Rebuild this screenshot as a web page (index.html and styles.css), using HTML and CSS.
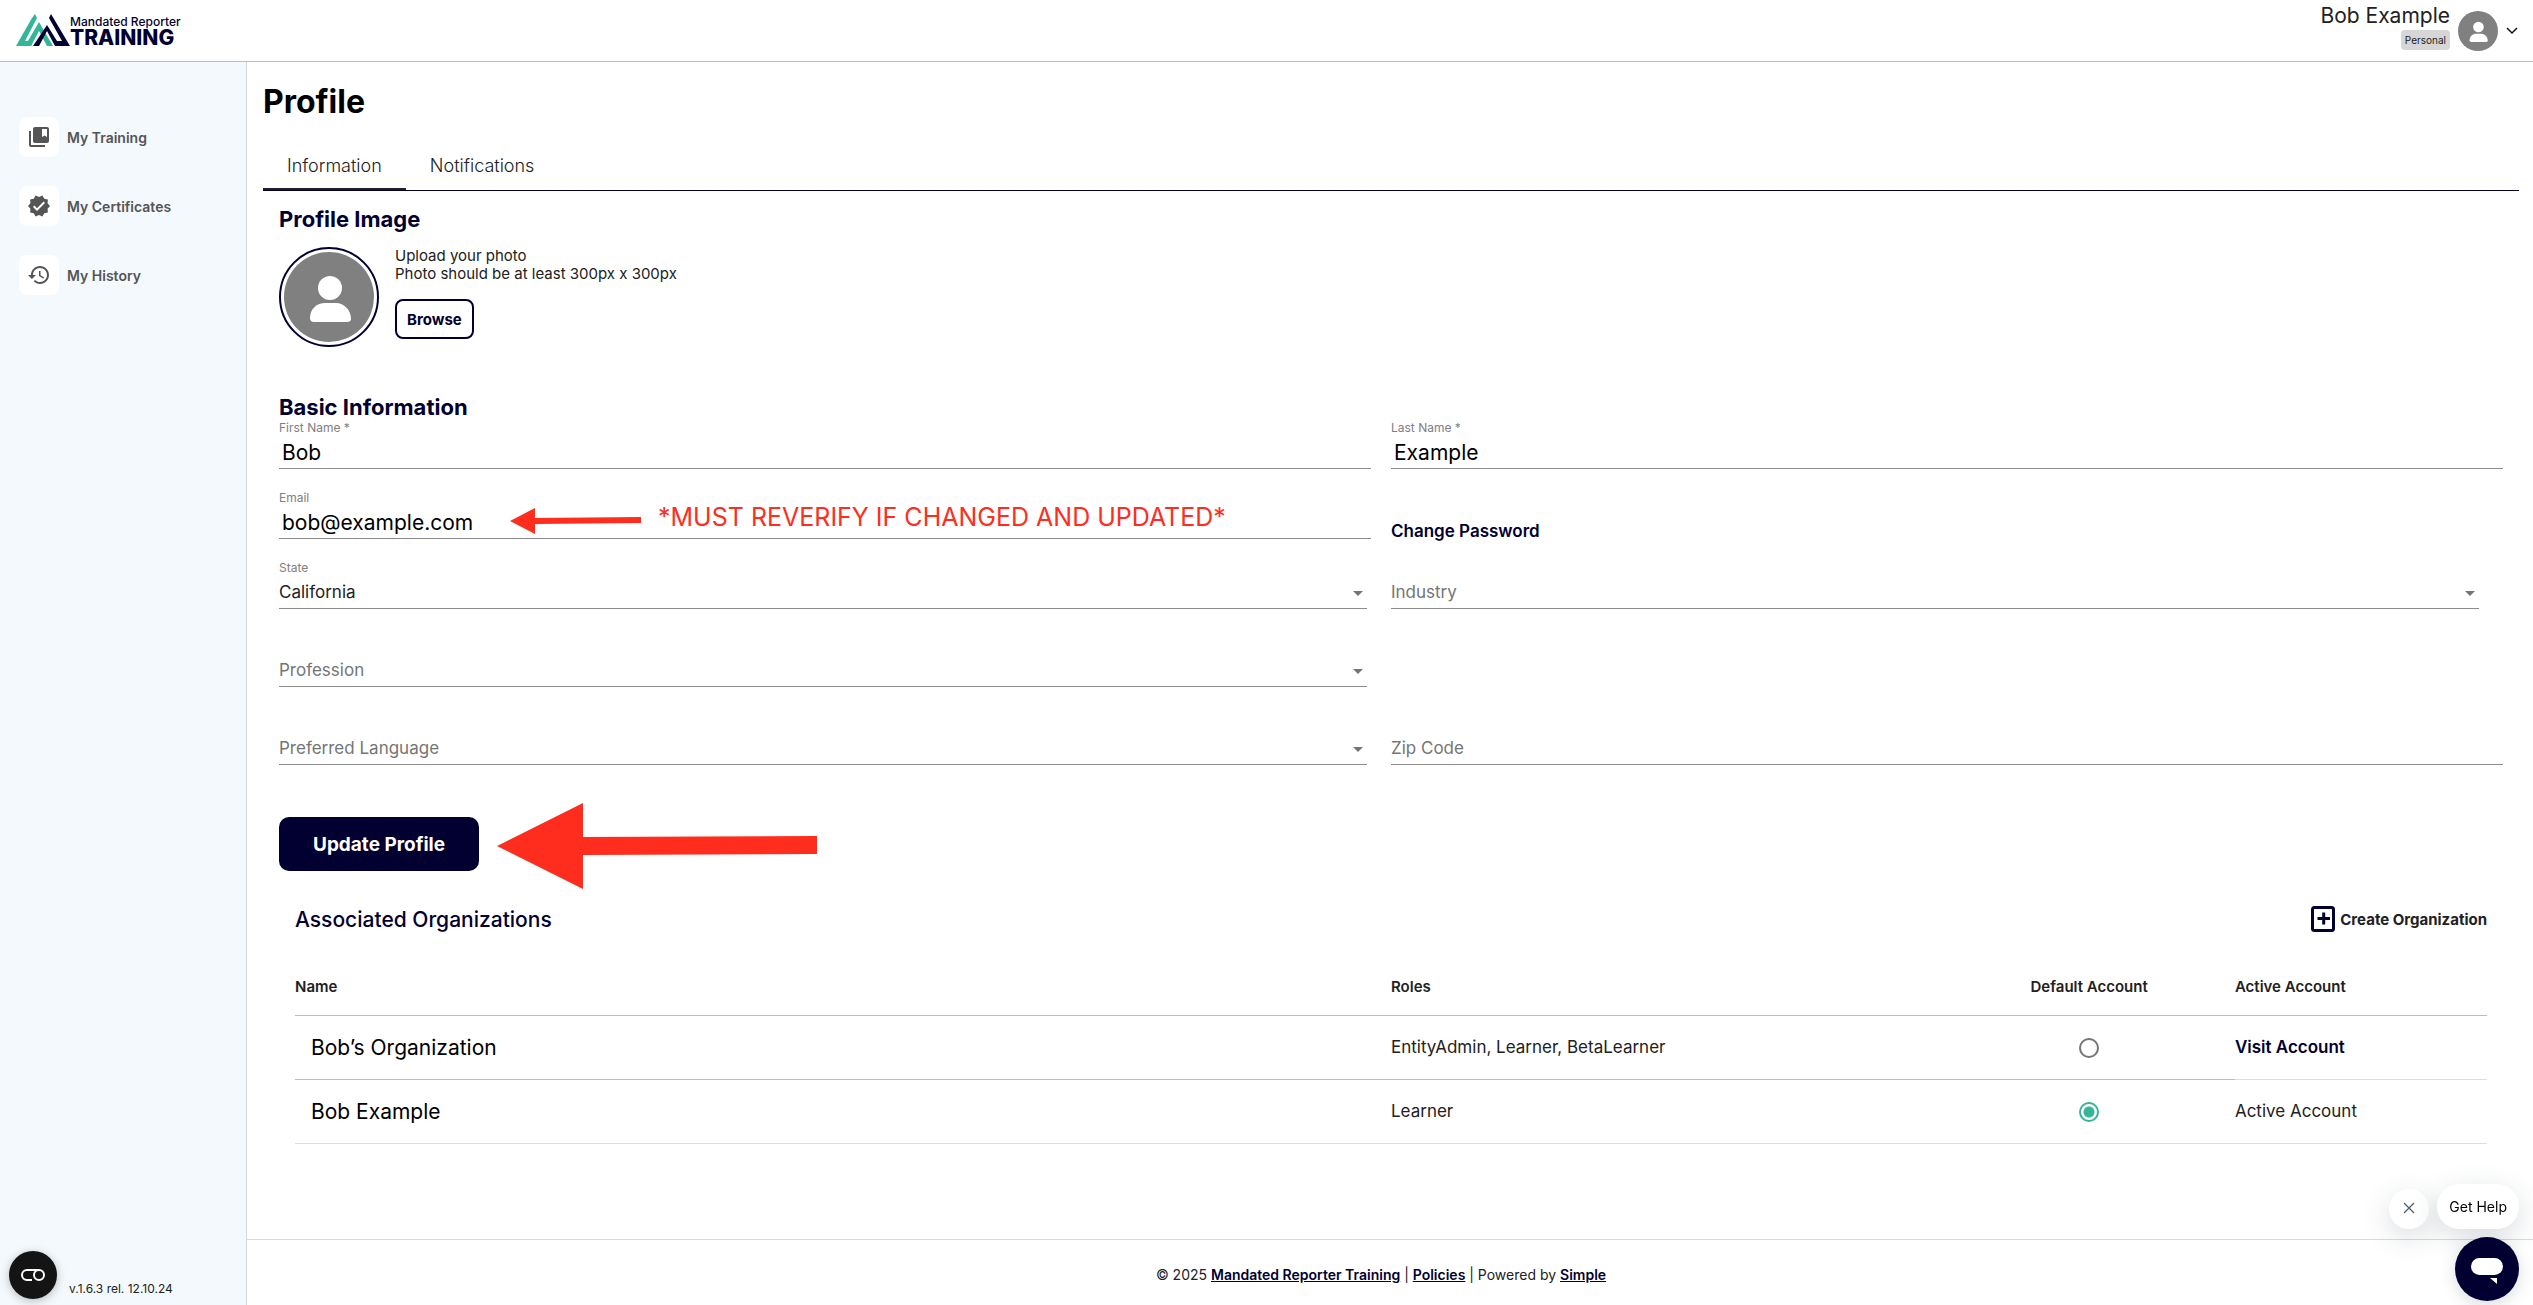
FILE: index.html
```html
<!DOCTYPE html>
<html lang="en">
<head>
    <meta charset="utf-8">
    <title>Profile - Mandated Reporter Training</title>
    <link rel="stylesheet" href="styles.css">
</head>
<body>
    <header class="topbar">
        <a class="logo" href="#">
            <svg class="logo-mark" width="54" height="33" viewBox="0 0 54 33" aria-hidden="true">
                <path d="M19 0L21 4L9 27H17L15 32H0L16 4Z" fill="#34b597"/>
                <path d="M23 8L37 32H31L23 17L15 32H9Z" fill="#34b597"/>
                <path d="M35 0L54 32H39L31 17L23 32H17L31 11L41 27H46L33 4Z" fill="#010030"/>
            </svg>
            <span class="logo-text">
                <span class="logo-small">Mandated Reporter</span>
                <span class="logo-big">TRAINING</span>
            </span>
        </a>
        <button type="button" class="account">
            <span class="account-text">
                <span class="account-name">Bob Example</span>
                <span class="account-badge">Personal</span>
            </span>
            <svg width="40" height="40" viewBox="0 0 90 90" aria-hidden="true">
                <circle cx="45" cy="45" r="45" fill="#808080"/>
                <circle cx="46" cy="36" r="12" fill="#fff"/>
                <path d="M26 66C26 57 33 51 41 51H52C60 51 67 58 67 67Q67 70 63 70H30Q26 70 26 66Z" fill="#fff"/>
            </svg>
            <svg width="12" height="8" viewBox="0 0 12 8" aria-hidden="true">
                <path d="M1 1L6 6L11 1" fill="none" stroke="#111" stroke-width="1.5"/>
            </svg>
        </button>
    </header>

    <div class="page">
        <aside class="sidebar">
            <nav class="menu">
                <a class="menu-item" href="#">
                    <span class="menu-icon">
                        <svg width="24" height="24" viewBox="0 0 24 24"><path d="M4 6H2v14c0 1.1.9 2 2 2h14v-2H4V6zM20 2H8c-1.1 0-2 .9-2 2v12c0 1.1.9 2 2 2h12c1.1 0 2-.9 2-2V4c0-1.1-.9-2-2-2zm0 10-2.5-1.5L15 12V4h5v8z"/></svg>
                    </span>
                    My Training
                </a>
                <a class="menu-item" href="#">
                    <span class="menu-icon">
                        <svg width="24" height="24" viewBox="0 0 24 24"><path d="M23 12l-2.44-2.78.34-3.68-3.61-.82-1.89-3.18L12 3 8.6 1.54 6.71 4.72l-3.61.81.34 3.68L1 12l2.44 2.78-.34 3.69 3.61.82 1.89 3.18L12 21l3.4 1.46 1.89-3.18 3.61-.82-.34-3.68L23 12zm-13 5l-4-4 1.41-1.41L10 14.17l6.59-6.59L18 9l-8 8z"/></svg>
                    </span>
                    My Certificates
                </a>
                <a class="menu-item" href="#">
                    <span class="menu-icon">
                        <svg width="24" height="24" viewBox="0 0 24 24"><path d="M13 3c-4.97 0-9 4.03-9 9H1l3.89 3.89.07.14L9 12H6c0-3.87 3.13-7 7-7s7 3.13 7 7-3.13 7-7 7c-1.93 0-3.68-.79-4.94-2.06l-1.42 1.42C8.27 19.99 10.51 21 13 21c4.97 0 9-4.03 9-9s-4.03-9-9-9zm-1 5v5l4.28 2.54.72-1.21-3.5-2.08V8H12z"/></svg>
                    </span>
                    My History
                </a>
            </nav>
            <div class="sidebar-bottom">
                <button type="button" class="cookie-button" aria-label="Cookie preferences">
                    <svg width="26" height="14" viewBox="0 0 26 14">
                        <path d="M12 12H7A5 5 0 0 1 7 2H19" fill="none" stroke="#fff" stroke-width="2"/>
                        <circle cx="19" cy="7" r="5" fill="none" stroke="#fff" stroke-width="2"/>
                    </svg>
                </button>
                <span class="version">v.1.6.3 rel. 12.10.24</span>
            </div>
        </aside>

        <div class="content">
            <main class="main">
                <h1>Profile</h1>
                <div class="tabs" role="tablist">
                    <button type="button" class="tab active" role="tab" aria-selected="true">Information</button>
                    <button type="button" class="tab" role="tab" aria-selected="false">Notifications</button>
                </div>

                <section class="information">
                    <h2>Profile Image</h2>
                    <div class="photo">
                        <div class="photo-circle">
                            <svg width="90" height="90" viewBox="0 0 90 90" aria-hidden="true">
                                <circle cx="45" cy="45" r="45" fill="#808080"/>
                                <circle cx="46" cy="36" r="12" fill="#fff"/>
                                <path d="M26 66C26 57 33 51 41 51H52C60 51 67 58 67 67Q67 70 63 70H30Q26 70 26 66Z" fill="#fff"/>
                            </svg>
                        </div>
                        <div class="photo-info">
                            <p>Upload your photo</p>
                            <p>Photo should be at least 300px x 300px</p>
                            <button type="button" class="browse">Browse</button>
                        </div>
                    </div>

                    <h2>Basic Information</h2>
                    <form>
                        <div class="fields">
                            <div class="field">
                                <label for="firstName">First Name *</label>
                                <input type="text" id="firstName" value="Bob">
                            </div>
                            <div class="field">
                                <label for="lastName">Last Name *</label>
                                <input type="text" id="lastName" value="Example">
                            </div>
                            <div class="field">
                                <label for="email">Email</label>
                                <input type="email" id="email" value="bob@example.com">
                                <div class="email-note">
                                    <svg width="132" height="26" viewBox="0 0 132 26" aria-hidden="true">
                                        <path d="M0 13L25 0V10L131 9V15L25 16V26Z" fill="#ff2d1d"/>
                                    </svg>
                                    <span>*MUST REVERIFY IF CHANGED AND UPDATED*</span>
                                </div>
                            </div>
                            <div class="field">
                                <a class="link" href="#">Change Password</a>
                            </div>
                            <div class="field select-field">
                                <label for="state">State</label>
                                <select id="state"><option>California</option></select>
                            </div>
                            <div class="field select-field">
                                <select class="empty" aria-label="Industry"><option>Industry</option></select>
                            </div>
                            <div class="field select-field tall first-column">
                                <select class="empty" aria-label="Profession"><option>Profession</option></select>
                            </div>
                            <div class="field select-field tall first-column">
                                <select class="empty" aria-label="Preferred Language"><option>Preferred Language</option></select>
                            </div>
                            <div class="field tall">
                                <input type="text" class="empty" aria-label="Zip Code" placeholder="Zip Code">
                            </div>
                        </div>
                        <div class="actions">
                            <button type="submit" class="update">Update Profile</button>
                            <svg class="update-arrow" width="320" height="90" viewBox="0 0 320 90" aria-hidden="true">
                                <path d="M0 47L86 4V38L320 37V55L86 56V90Z" fill="#ff2d1d"/>
                            </svg>
                        </div>
                    </form>

                    <div class="organizations">
                        <div class="organizations-header">
                            <h3>Associated Organizations</h3>
                            <button type="button" class="create">
                                <svg width="24" height="26" viewBox="0 0 24 26" aria-hidden="true">
                                    <rect x="1.5" y="1.5" width="21" height="23" rx="2" fill="none" stroke="#010030" stroke-width="3"/>
                                    <path d="M6.5 12.5H19M12.7 6.5V18.5" stroke="#010030" stroke-width="3"/>
                                </svg>
                                Create Organization
                            </button>
                        </div>
                        <table>
                            <thead>
                                <tr>
                                    <th class="col-name">Name</th>
                                    <th class="col-roles">Roles</th>
                                    <th class="col-default">Default Account</th>
                                    <th>Active Account</th>
                                </tr>
                            </thead>
                            <tbody>
                                <tr>
                                    <td class="col-name">Bob’s Organization</td>
                                    <td>EntityAdmin, Learner, BetaLearner</td>
                                    <td class="col-default"><input type="radio" name="defaultAccount" aria-label="Bob’s Organization"></td>
                                    <td class="col-active"><a class="link" href="#">Visit Account</a></td>
                                </tr>
                                <tr>
                                    <td class="col-name">Bob Example</td>
                                    <td>Learner</td>
                                    <td class="col-default"><input type="radio" name="defaultAccount" aria-label="Bob Example" checked></td>
                                    <td>Active Account</td>
                                </tr>
                            </tbody>
                        </table>
                    </div>
                </section>
            </main>

            <footer class="footer">
                © 2025 <a href="#">Mandated Reporter Training</a> | <a href="#">Policies</a> | Powered by <a href="#">Simple</a>
            </footer>
        </div>
    </div>

    <div class="help">
        <div class="help-row">
            <button type="button" class="help-close" aria-label="Close">
                <svg width="12" height="12" viewBox="0 0 12 12"><path d="M1 1L11 11M11 1L1 11" stroke="#4f5e6b" stroke-width="1.3"/></svg>
            </button>
            <button type="button" class="help-label">Get Help</button>
        </div>
        <button type="button" class="help-chat" aria-label="Open chat">
            <svg width="32" height="26" viewBox="0 0 32 26">
                <rect width="32" height="17" rx="8.5" fill="#fff"/>
                <path d="M19 20H26V26Z" fill="#fff"/>
            </svg>
        </button>
    </div>
</body>
</html>
```
FILE: styles.css
```css
* {
    box-sizing: border-box;
}

body {
    margin: 0;
    min-height: 100vh;
    display: flex;
    flex-direction: column;
    background: #fff;
    color: #212121;
    font-family: Inter, "Open Sans", sans-serif;
    font-size: 17px;
}

h1, h2, h3, p {
    margin: 0;
}

button {
    background: none;
    border: none;
    padding: 0;
    color: inherit;
    font-family: inherit;
    cursor: pointer;
}

/* top bar */
.topbar {
    display: flex;
    justify-content: space-between;
    align-items: center;
    height: 62px;
    padding: 0 15px 0 16px;
    border-bottom: 1px solid #bdbdbd;
}

.logo {
    display: flex;
    align-items: center;
    color: #010030;
    text-decoration: none;
}

.logo-text {
    display: flex;
    flex-direction: column;
}

.logo-small {
    font-size: 12px;
    font-weight: 500;
    line-height: 14px;
}

.logo-big {
    font-size: 21px;
    font-weight: 800;
    line-height: 18px;
}

.account {
    display: flex;
    align-items: center;
    gap: 8px;
}

.account-text {
    display: flex;
    flex-direction: column;
    align-items: flex-end;
    gap: 2px;
    padding-bottom: 8px;
}

.account-name {
    font-size: 21px;
    line-height: 24px;
}

.account-badge {
    padding: 0 4px;
    border-radius: 4px;
    background: #d6d6d6;
    font-size: 10px;
    line-height: 20px;
}

.page {
    flex: 1;
    display: flex;
}

/* sidebar */
.sidebar {
    width: 247px;
    display: flex;
    flex-direction: column;
    justify-content: space-between;
    padding: 55px 0 6px;
    border-right: 1px solid #cfd8dc;
    background: #f3f9fc;
}

.menu {
    display: flex;
    flex-direction: column;
    gap: 29px;
    padding-left: 19px;
}

.menu-item {
    display: flex;
    align-items: center;
    gap: 8px;
    color: #555;
    font-size: 14px;
    font-weight: 600;
    text-decoration: none;
}

.menu-icon {
    display: flex;
    align-items: center;
    justify-content: center;
    width: 40px;
    height: 40px;
    border-radius: 8px;
    background: #fff;
    fill: #555;
}

.sidebar-bottom {
    display: flex;
    align-items: flex-end;
    gap: 12px;
    padding-left: 9px;
}

.cookie-button {
    display: flex;
    align-items: center;
    justify-content: center;
    width: 48px;
    height: 48px;
    border-radius: 50%;
    background: #141414;
    box-shadow: 0 2px 10px rgba(0, 0, 0, 0.25);
}

.version {
    font-size: 12px;
    line-height: 20px;
}

.content {
    flex: 1;
    display: flex;
    flex-direction: column;
}

.main {
    flex: 1;
    padding: 20px 14px 0 16px;
}

h1 {
    color: #000;
    font-size: 32px;
    line-height: 40px;
}

h2 {
    color: #010030;
    font-size: 22px;
    font-weight: 700;
    line-height: 26px;
}

/* tabs */
.tabs {
    display: flex;
    margin-top: 20px;
    border-bottom: 1px solid #010030;
}

.tab {
    height: 48px;
    padding: 0 24px;
    border-bottom: 2px solid transparent;
    font-size: 18px;
    font-weight: 300;
}

.tab.active {
    border-bottom-color: #212121;
}

.information {
    padding: 15px 16px 0;
}

/* profile image */
.photo {
    display: flex;
    gap: 16px;
    margin: 15px 0 47px;
}

.photo-circle {
    display: flex;
    align-items: center;
    justify-content: center;
    width: 100px;
    height: 100px;
    border: 2px solid #010030;
    border-radius: 50%;
}

.photo-info {
    font-size: 15px;
    line-height: 18px;
}

.browse {
    height: 40px;
    margin-top: 16px;
    padding: 0 10px;
    border: 2px solid #010030;
    border-radius: 8px;
    color: #010030;
    font-size: 15px;
    font-weight: 700;
}

/* form */
.fields {
    display: grid;
    grid-template-columns: 1fr 1fr;
    row-gap: 21px;
    align-items: end;
}

.field {
    position: relative;
    display: flex;
    flex-direction: column;
    justify-content: flex-end;
    min-height: 49px;
}

.field:nth-child(odd) {
    padding-right: 20px;
}

.field.tall {
    min-height: 57px;
    padding-right: 0;
}

.field.select-field {
    padding-right: 24px;
}

.first-column {
    grid-column: 1;
}

.field label {
    color: #808080;
    font-size: 12px;
    line-height: 16px;
}

.field input,
.field select {
    width: 100%;
    height: 33px;
    border: none;
    border-bottom: 1px solid #8c8c8c;
    border-radius: 0;
    outline: none;
    background: transparent;
    font-family: inherit;
}

.field input {
    padding: 0 3px;
    color: #000;
    font-size: 21px;
}

.field select {
    appearance: none;
    padding: 0;
    color: #212121;
    font-size: 17px;
}

.field .empty {
    padding: 0;
    color: #757575;
    font-size: 17px;
}

.field .empty::placeholder {
    color: #757575;
}

.select-field::after {
    content: "";
    position: absolute;
    right: 28px;
    bottom: 13px;
    border: 5px solid transparent;
    border-top-color: #757575;
    border-bottom: none;
}

.link {
    color: #010030;
    font-size: 17px;
    font-weight: 600;
    line-height: 16px;
    text-decoration: none;
}

.email-note {
    position: absolute;
    left: 231px;
    bottom: 5px;
    display: flex;
    align-items: flex-start;
    gap: 16px;
    color: #ff2d1d;
    font-size: 25px;
    line-height: 18px;
    white-space: nowrap;
}

.actions {
    display: flex;
    align-items: center;
    gap: 18px;
    height: 90px;
    margin-top: 34px;
}

.update {
    min-width: 200px;
    height: 54px;
    padding: 0 32px;
    border-radius: 10px;
    background: #010030;
    color: #fff;
    font-size: 19px;
    font-weight: 700;
}

/* organizations */
.organizations {
    padding: 16px 16px 0;
}

.organizations-header {
    display: flex;
    justify-content: space-between;
    align-items: center;
    height: 28px;
}

h3 {
    color: #010030;
    font-size: 21px;
    font-weight: 500;
}

.create {
    display: flex;
    align-items: center;
    gap: 5px;
    font-size: 15px;
    font-weight: 700;
}

table {
    width: 100%;
    margin-top: 26px;
    border-collapse: collapse;
    table-layout: fixed;
}

th {
    height: 56px;
    padding: 0;
    border-bottom: 1px solid #bdbdbd;
    font-size: 15px;
    font-weight: 600;
    text-align: left;
}

td {
    height: 64px;
    padding: 0;
    border-bottom: 1px solid #bdbdbd;
    font-size: 17px;
}

td.col-active,
tr:last-child td {
    border-bottom-color: #dedede;
}

.col-name {
    width: 50%;
}

td.col-name {
    padding-left: 16px;
    color: #000;
    font-size: 21px;
}

.col-roles {
    width: 25.2%;
}

.col-default {
    width: 13.3%;
    text-align: center;
}

input[type="radio"] {
    appearance: none;
    width: 20px;
    height: 20px;
    margin: 0;
    border: 2px solid #757575;
    border-radius: 50%;
    vertical-align: middle;
}

input[type="radio"]:checked {
    border-color: #34b597;
    background: radial-gradient(#34b597 5px, transparent 6px);
}

.footer {
    padding: 25px 34px 20px 16px;
    border-top: 1px solid #dadada;
    font-size: 14px;
    line-height: 20px;
    text-align: center;
}

.footer a {
    color: #010030;
    font-weight: 600;
}

/* help widget */
.help {
    position: fixed;
    right: 14px;
    bottom: 4px;
    display: flex;
    flex-direction: column;
    align-items: flex-end;
    gap: 8px;
}

.help-row {
    display: flex;
    align-items: flex-end;
    gap: 8px;
}

.help-row button {
    background: #fff;
    box-shadow: 0 8px 28px rgba(60, 80, 90, 0.2);
}

.help-close {
    width: 40px;
    height: 40px;
    border-radius: 50%;
}

.help-label {
    height: 45px;
    padding: 0 12px;
    border-radius: 22px;
    color: #000;
    font-size: 14px;
}

.help-chat {
    display: flex;
    align-items: center;
    justify-content: center;
    width: 64px;
    height: 64px;
    padding-top: 4px;
    border-radius: 50%;
    background: #010030;
    box-shadow: 0 4px 16px rgba(60, 80, 90, 0.2);
}
```
